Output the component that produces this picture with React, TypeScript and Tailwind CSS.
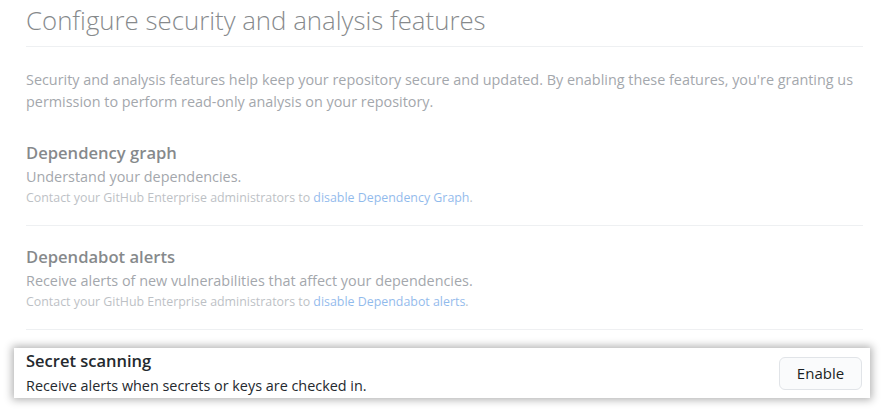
export default function App() {
  return (
    <div className="w-[883px] h-[412px] bg-white overflow-hidden font-['Open_Sans',sans-serif]">
      <div className="pl-[26px] pr-[20px] opacity-55">
        {/* Header */}
        <div className="pt-[4px] pb-[10px] border-b border-[#e1e4e8]">
          <h1 className="text-[25.8px] leading-[32px] font-light text-[#24292e]">
            Configure security and analysis features
          </h1>
        </div>
        <p className="mt-[22px] text-[14.4px] leading-[22px] text-[#586069]">
          Security and analysis features help keep your repository secure and updated. By enabling these features, you're granting us permission to perform read-only analysis on your repository.
        </p>

        {/* Dependency graph */}
        <div className="pt-[27px] pb-[17px] border-b border-[#e1e4e8]">
          <h3 className="text-[16.6px] leading-[26px] font-semibold text-[#24292e]">Dependency graph</h3>
          <p className="text-[14.4px] leading-[22px] text-[#586069]">Understand your dependencies.</p>
          <p className="text-[12.4px] leading-[20px] text-[#6a737d] opacity-80">
            Contact your GitHub Enterprise administrators to{" "}
            <a className="text-[#0366d6]">disable Dependency Graph</a>.
          </p>
        </div>

        {/* Dependabot alerts */}
        <div className="pt-[18px] pb-[17px] border-b border-[#e1e4e8]">
          <h3 className="text-[16.6px] leading-[26px] font-semibold text-[#24292e]">Dependabot alerts</h3>
          <p className="text-[14.4px] leading-[22px] text-[#586069]">
            Receive alerts of new vulnerabilities that affect your dependencies.
          </p>
          <p className="text-[12.4px] leading-[20px] text-[#6a737d] opacity-80">
            Contact your GitHub Enterprise administrators to{" "}
            <a className="text-[#0366d6]">disable Dependabot alerts</a>.
          </p>
        </div>
      </div>

      {/* Secret scanning (highlighted) */}
      <div className="mt-[18px] ml-[14px] w-[856px] h-[50px] bg-white shadow-[0_0_8px_2px_rgba(0,0,0,0.3)] flex items-center justify-between pl-[12px] pr-[8px]">
        <div>
          <h3 className="text-[16.5px] leading-[26px] font-semibold text-[#24292e]">Secret scanning</h3>
          <p className="text-[14.4px] leading-[24px] text-[#24292e]">Receive alerts when secrets or keys are checked in.</p>
        </div>
        <button className="w-[83px] h-[33px] rounded-[6px] border border-[#e1e4e8] bg-[#fafbfc] text-[15px] font-medium text-[#1b1f23]">
          Enable
        </button>
      </div>
    </div>
  );
}
